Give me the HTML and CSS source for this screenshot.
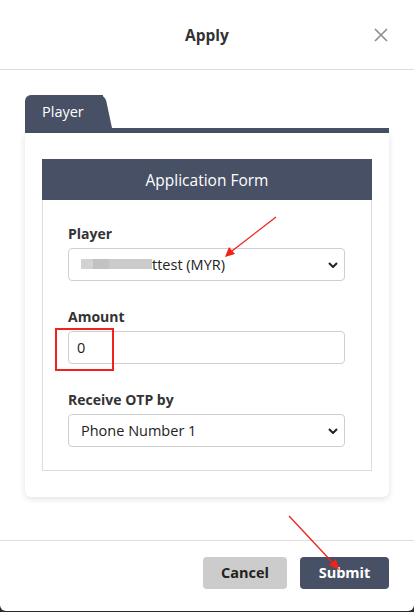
FILE: index.html
```html
<!DOCTYPE html>
<html lang="en">
<head>
    <meta charset="UTF-8">
    <meta name="viewport" content="width=device-width, initial-scale=1.0">
    <title>Apply</title>
    <link rel="stylesheet" href="styles.css">
</head>
<body>

    <div class="modal">
        <div class="modal-header">
            <h2 class="modal-title">Apply</h2>
            <button class="close-btn" aria-label="Close">
                <svg viewBox="0 0 14 14" width="14" height="14">
                    <path d="M1 1L13 13M13 1L1 13" stroke="#8c8c8c" stroke-width="1.6" fill="none"/>
                </svg>
            </button>
        </div>

        <div class="modal-body">
            <div class="tab-card">
                <div class="tab-strip">
                    <span class="tab">Player</span>
                </div>
                <div class="tab-content">
                    <div class="form-panel">
                        <div class="form-panel-header">Application Form</div>
                        <div class="form-panel-body">
                            <div class="form-group">
                                <label class="form-label">Player</label>
                                <div class="select-box">
                                    <span class="select-text">
                                        <span class="blur-name">
                                            <span class="blur b1"></span><span class="blur b2"></span><span class="blur b3"></span>
                                        </span>ttest (MYR)
                                    </span>
                                    <svg class="chevron" viewBox="0 0 10 6" width="10" height="6">
                                        <path d="M1 1L5 5L9 1" stroke="#222" stroke-width="2" fill="none"/>
                                    </svg>
                                </div>
                            </div>
                            <div class="form-group">
                                <label class="form-label">Amount</label>
                                <input class="text-input" type="text" value="0">
                            </div>
                            <div class="form-group">
                                <label class="form-label">Receive OTP by</label>
                                <div class="select-box">
                                    <span class="select-text">Phone Number 1</span>
                                    <svg class="chevron" viewBox="0 0 10 6" width="10" height="6">
                                        <path d="M1 1L5 5L9 1" stroke="#222" stroke-width="2" fill="none"/>
                                    </svg>
                                </div>
                            </div>
                        </div>
                    </div>
                </div>
            </div>
        </div>

        <div class="modal-footer">
            <button class="btn btn-cancel">Cancel</button>
            <button class="btn btn-submit">Submit</button>
        </div>

        <!-- screenshot annotations -->
        <svg class="annotations" viewBox="0 0 414 612" width="414" height="612">
            <line x1="276" y1="217" x2="232" y2="251" stroke="#f0221b" stroke-width="1.3"/>
            <polygon points="225,257 229,247 235,254" fill="#f0221b"/>
            <rect x="56" y="329" width="57" height="41" fill="none" stroke="#f0221b" stroke-width="2"/>
            <line x1="289" y1="516" x2="333" y2="563" stroke="#f0221b" stroke-width="1.3"/>
            <polygon points="339,570 329,565 336,559" fill="#f0221b"/>
        </svg>
    </div>

</body>
</html>
```

FILE: styles.css
```css
body {
    margin: 0;
    background-color: #2b2b2b;
    font-family: "Open Sans", "Noto Sans", sans-serif;
    color: #333333;
}

.modal {
    position: relative;
    width: 414px;
    height: 611px;
    background-color: #ffffff;
    border-radius: 0 0 6px 6px;
    display: flex;
    flex-direction: column;
    overflow: hidden;
}

/* Header */
.modal-header {
    height: 69px;
    border-bottom: 1px solid #dedede;
    display: flex;
    align-items: center;
    justify-content: center;
    position: relative;
    flex-shrink: 0;
}

.modal-title {
    margin: 0;
    font-size: 15.5px;
    font-weight: 700;
    color: #333333;
}

.close-btn {
    position: absolute;
    right: 26px;
    top: 28px;
    border: none;
    background: none;
    padding: 0;
    width: 14px;
    height: 14px;
    display: flex;
}

/* Body */
.modal-body {
    padding: 25px 25px 42px;
    flex-grow: 1;
}

.tab-strip {
    height: 33px;
    border-bottom: 5px solid #475064;
}

.tab {
    position: relative;
    display: inline-block;
    width: 78px;
    height: 33px;
    line-height: 33px;
    background-color: #475064;
    color: #ffffff;
    font-size: 14.5px;
    padding-left: 17px;
    box-sizing: border-box;
    border-radius: 6px 0 0 0;
}
.tab::after {
    content: "";
    position: absolute;
    top: 0;
    right: -9px;
    width: 20px;
    height: 33px;
    background-color: #475064;
    border-radius: 0 6px 0 0;
    transform: skewX(12deg);
    transform-origin: bottom left;
}

.tab-content {
    background-color: #ffffff;
    padding: 26px 17px;
    border-radius: 0 0 6px 6px;
    box-shadow: 0 2px 6px rgba(0, 0, 0, 0.12);
}

.form-panel-header {
    height: 41px;
    line-height: 42px;
    background-color: #475064;
    color: #ffffff;
    text-align: center;
    font-size: 15.5px;
}

.form-panel-body {
    border: 1px solid #dcdcdc;
    border-top: none;
    padding: 24px 26px 23px 25px;
}

.form-group {
    margin-bottom: 26px;
}
.form-group:last-child {
    margin-bottom: 0;
}

.form-label {
    display: block;
    font-size: 14px;
    font-weight: 700;
    line-height: 20px;
    margin-bottom: 4px;
    color: #333333;
}

.select-box,
.text-input {
    height: 33px;
    border: 1px solid #cfcfcf;
    border-radius: 4px;
    box-sizing: border-box;
    font-family: inherit;
    font-size: 14.5px;
    color: #222222;
}

.select-box {
    display: flex;
    align-items: center;
    justify-content: space-between;
    padding: 0 6px 0 12px;
}

.select-text {
    display: flex;
    align-items: center;
    padding-bottom: 1px;
}

.blur-name {
    display: flex;
    align-items: center;
    width: 71px;
    height: 12px;
}
.blur {
    height: 10px;
    filter: blur(0.6px);
}
.b1 { width: 12px; background-color: #d2d2d2; }
.b2 { width: 16px; background-color: #c2c2c2; }
.b3 { width: 43px; background-color: #cbcbcb; }

.text-input {
    display: block;
    width: 100%;
    padding: 0 8px;
    outline: none;
}

/* Footer */
.modal-footer {
    border-top: 1px solid #dedede;
    height: 71px;
    display: flex;
    align-items: center;
    justify-content: flex-end;
    gap: 13px;
    padding: 0 25px 7px;
    box-sizing: border-box;
    flex-shrink: 0;
}

.btn {
    height: 32px;
    border: none;
    border-radius: 4px;
    font-family: inherit;
    font-size: 14.5px;
    font-weight: 700;
    cursor: pointer;
}

.btn-cancel {
    width: 84px;
    background-color: #cccccc;
    color: #222222;
}

.btn-submit {
    width: 89px;
    background-color: #475064;
    color: #ffffff;
}

.annotations {
    position: absolute;
    top: 0;
    left: 0;
    pointer-events: none;
}
```
